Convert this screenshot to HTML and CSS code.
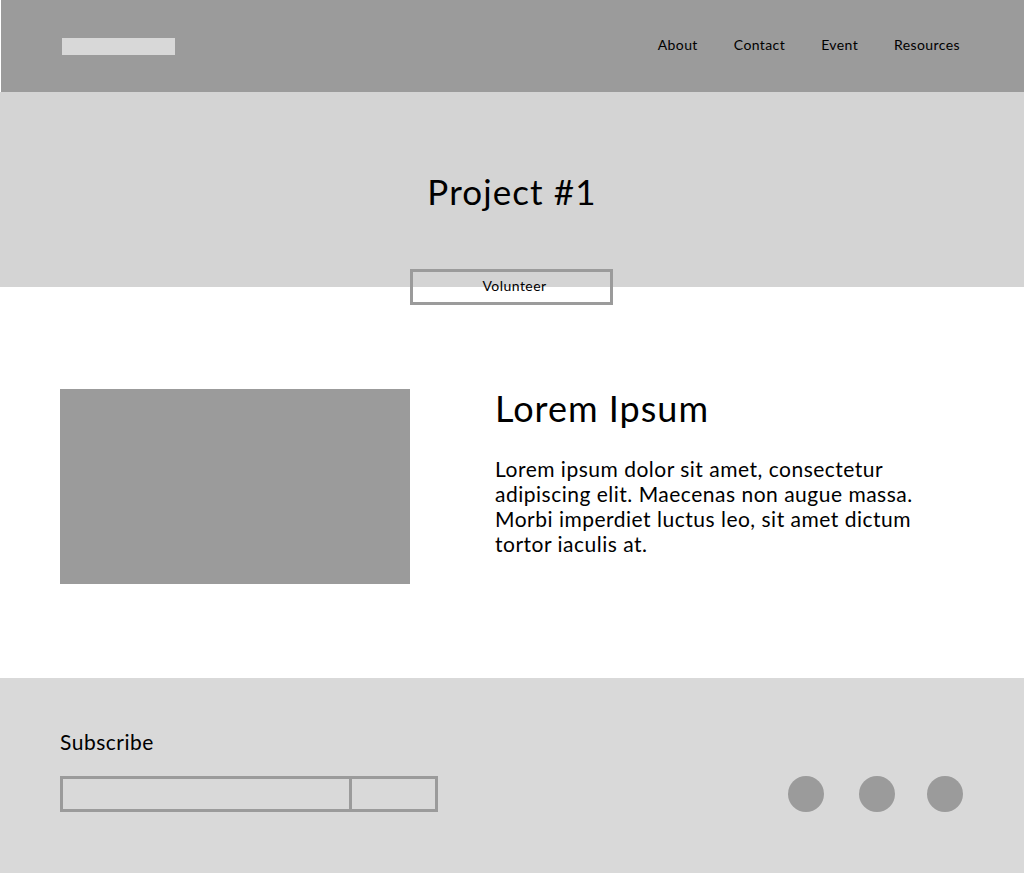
FILE: index.html
```html
<!DOCTYPE html>
<html lang="en">
<head>
    <meta charset="UTF-8">
    <title>Project #1</title>
    <link rel="stylesheet" href="styles.css">
</head>
<body>
    <header class="site-header">
        <div class="logo"></div>
        <nav class="nav">
            <a href="#">About</a>
            <a href="#">Contact</a>
            <a href="#">Event</a>
            <a href="#">Resources</a>
        </nav>
    </header>

    <section class="hero">
        <h1>Project #1</h1>
        <button class="volunteer">Volunteer</button>
    </section>

    <main class="content">
        <div class="image-box"></div>
        <div class="text-box">
            <h2>Lorem Ipsum</h2>
            <p>Lorem ipsum dolor sit amet, consectetur adipiscing elit. Maecenas non augue massa. Morbi imperdiet luctus leo, sit amet dictum tortor iaculis at.</p>
        </div>
    </main>

    <footer class="site-footer">
        <div class="subscribe">
            <h3>Subscribe</h3>
            <div class="subscribe-form">
                <input type="text" class="email">
                <button class="send"></button>
            </div>
        </div>
        <div class="socials">
            <span class="dot"></span>
            <span class="dot"></span>
            <span class="dot"></span>
        </div>
    </footer>
</body>
</html>
```

FILE: styles.css
```css
body {
    font-family: Lato, "Noto Sans", Arial, sans-serif;
    margin: 0;
    padding: 0;
    color: #000;
    background: #fff;
}

.site-header {
    height: 92px;
    margin-left: 1px;
    background-color: #9b9b9b;
    display: flex;
    align-items: center;
    justify-content: space-between;
    padding: 0 63px 0 61px;
}

.logo {
    width: 113px;
    height: 17px;
    background-color: #d8d8d8;
}

.nav {
    display: flex;
    gap: 36px;
    margin-top: -3px;
    margin-right: 1px;
}

.nav a {
    color: #000;
    text-decoration: none;
    font-size: 14px;
    letter-spacing: 0.4px;
}

.hero {
    height: 195px;
    background-color: #d4d4d4;
    position: relative;
    text-align: center;
}

.hero h1 {
    margin: 0;
    padding-top: 79px;
    font-size: 35px;
    font-weight: 400;
    line-height: 40px;
    letter-spacing: 1.1px;
}

/* sits across the hero's bottom edge */
.volunteer {
    position: absolute;
    left: 410px;
    top: 177px;
    width: 203px;
    height: 36px;
    border: 3px solid #9b9b9b;
    background: transparent;
    font-family: inherit;
    font-size: 14px;
    letter-spacing: 0.45px;
    line-height: 14px;
    color: #000;
    padding: 0 0 2px 6px;
}

.content {
    display: flex;
    align-items: flex-start;
    padding: 102px 60px 0 60px;
    height: 289px;
    gap: 85px;
}

.image-box {
    width: 350px;
    height: 195px;
    background-color: #9b9b9b;
    flex-shrink: 0;
}

.text-box h2 {
    margin: -3px 0 0 0;
    font-size: 36px;
    font-weight: 400;
    line-height: 44px;
    letter-spacing: 1px;
}

.text-box p {
    margin: 26px 0 0 0;
    font-size: 21px;
    line-height: 25px;
    letter-spacing: 0.5px;
    width: 440px;
}

.site-footer {
    height: 195px;
    background-color: #d9d9d9;
    display: flex;
    justify-content: space-between;
    align-items: flex-start;
    padding: 0 61px 0 60px;
}

.subscribe h3 {
    margin: 51px 0 0 0;
    font-size: 21px;
    font-weight: 400;
    line-height: 26px;
    letter-spacing: 0.5px;
}

.subscribe-form {
    display: flex;
    margin-top: 21px;
    width: 378px;
    height: 36px;
    border: 3px solid #9b9b9b;
    box-sizing: border-box;
}

.email {
    width: 286px;
    border: none;
    border-right: 3px solid #9b9b9b;
    background: transparent;
    padding: 0;
    margin: 0;
}

.send {
    flex: 1;
    border: none;
    background: transparent;
    padding: 0;
}

.socials {
    display: flex;
    gap: 35px;
    margin-top: 98px;
}

.dot {
    width: 36px;
    height: 36px;
    border-radius: 50%;
    background-color: #9b9b9b;
}

.dot:last-child {
    margin-left: -3px;
}
```
